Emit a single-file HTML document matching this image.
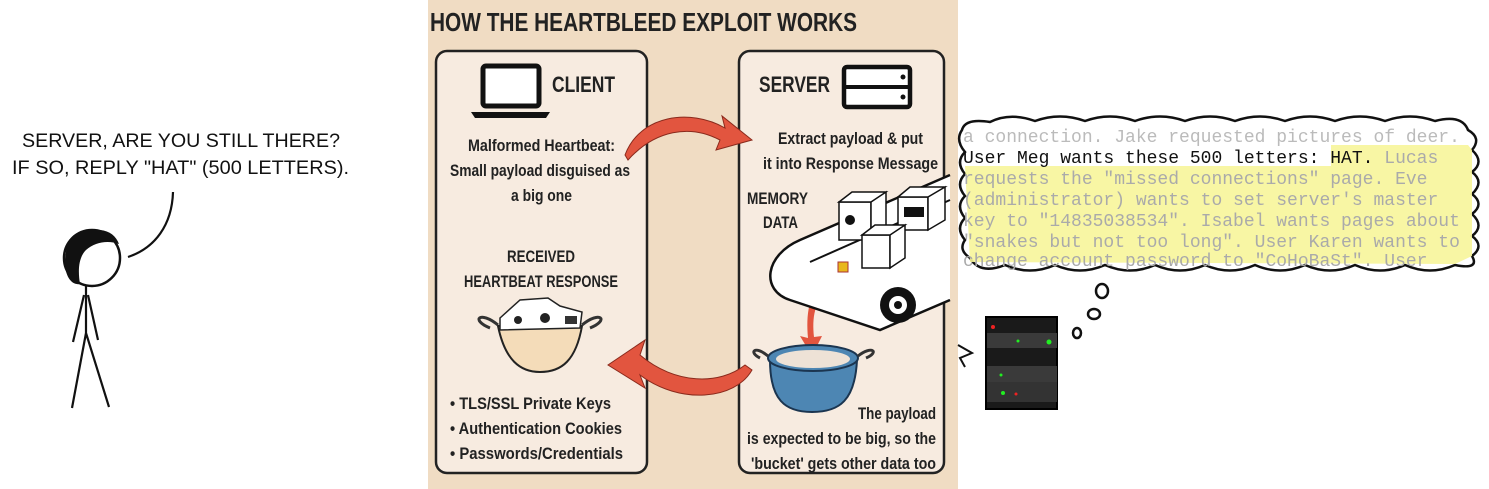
<!DOCTYPE html>
<html><head><meta charset="utf-8"><style>
html,body{margin:0;padding:0;background:#fff;width:1489px;height:489px;overflow:hidden}
svg{display:block}
.c{font-family:"Liberation Sans",sans-serif;font-weight:bold;fill:#222}
.h{font-family:"Liberation Sans",sans-serif;fill:#111}
.m{font-family:"Liberation Mono",monospace;font-size:18px}
</style></head><body>
<svg width="1489" height="489" viewBox="0 0 1489 489" xmlns="http://www.w3.org/2000/svg">
<text class="h" x="22" y="147" font-size="19" textLength="318" lengthAdjust="spacingAndGlyphs">SERVER, ARE YOU STILL THERE?</text>
<text class="h" x="12" y="174" font-size="19" textLength="337" lengthAdjust="spacingAndGlyphs">IF SO, REPLY "HAT" (500 LETTERS).</text>
<path d="M173 192 C172 225 155 248 128 257" fill="none" stroke="#111" stroke-width="2.2"/>
<circle cx="92" cy="258" r="28" fill="none" stroke="#111" stroke-width="2.5"/>
<path d="M66 252 C66 234 82 228 100 230 C110 231 116 236 119 244 C108 240 95 242 86 250 C78 258 78 272 80 284 C70 286 62 272 66 252Z" fill="#111"/>
<path d="M86 286 L86 335 M84 295 L73 342 M88 295 L98 340 M86 333 L72 408 M86 333 L109 407" stroke="#111" stroke-width="2.2" fill="none"/>
<rect x="428" y="0" width="530" height="489" fill="#f0dcc3"/>
<text class="c" x="430" y="31" font-size="26" textLength="427" lengthAdjust="spacingAndGlyphs" fill="#111">HOW THE HEARTBLEED EXPLOIT WORKS</text>
<rect x="436" y="51" width="211" height="422" rx="11" fill="#f7ebe0" stroke="#222" stroke-width="2.5"/>
<rect x="739" y="51" width="205" height="422" rx="11" fill="#f7ebe0" stroke="#222" stroke-width="2.5"/>
<rect x="483" y="66" width="56" height="40" rx="3" fill="#fff" stroke="#111" stroke-width="5"/>
<path d="M471 112 L550 112 L546 118 L475 118Z" fill="#111"/>
<text class="c" x="552" y="92" font-size="22" textLength="63" lengthAdjust="spacingAndGlyphs">CLIENT</text>
<text class="c" x="759" y="92" font-size="22" textLength="71" lengthAdjust="spacingAndGlyphs">SERVER</text>
<rect x="844" y="67" width="66" height="40" rx="3" fill="#fff" stroke="#111" stroke-width="4.5"/>
<line x1="844" y1="87" x2="910" y2="87" stroke="#111" stroke-width="4"/>
<circle cx="903" cy="77" r="2.5" fill="#111"/><circle cx="903" cy="97" r="2.5" fill="#111"/>
<g class="c" font-size="17">
<text x="468" y="151" textLength="147" lengthAdjust="spacingAndGlyphs">Malformed Heartbeat:</text>
<text x="450" y="176" textLength="180" lengthAdjust="spacingAndGlyphs">Small payload disguised as</text>
<text x="511" y="201" textLength="61" lengthAdjust="spacingAndGlyphs">a big one</text>
<text x="778" y="144" textLength="145" lengthAdjust="spacingAndGlyphs">Extract payload &amp; put</text>
<text x="763" y="169" textLength="175" lengthAdjust="spacingAndGlyphs">it into Response Message</text>
<text x="507" y="262" textLength="68" lengthAdjust="spacingAndGlyphs">RECEIVED</text>
<text x="464" y="287" textLength="154" lengthAdjust="spacingAndGlyphs">HEARTBEAT RESPONSE</text>
<text x="747" y="204" textLength="61" lengthAdjust="spacingAndGlyphs">MEMORY</text>
<text x="763" y="228" textLength="35" lengthAdjust="spacingAndGlyphs">DATA</text>
<text x="450" y="409" textLength="161" lengthAdjust="spacingAndGlyphs">• TLS/SSL Private Keys</text>
<text x="450" y="434" textLength="172" lengthAdjust="spacingAndGlyphs">• Authentication Cookies</text>
<text x="450" y="459" textLength="173" lengthAdjust="spacingAndGlyphs">• Passwords/Credentials</text>
<text x="858" y="419" textLength="78" lengthAdjust="spacingAndGlyphs">The payload</text>
<text x="747" y="444" textLength="189" lengthAdjust="spacingAndGlyphs">is expected to be big, so the</text>
<text x="751" y="469" textLength="185" lengthAdjust="spacingAndGlyphs">'bucket' gets other data too</text>
</g>
<path d="M625 155 C640 115 690 108 725 128 L722 116 L752 140 L716 150 L720 140 C690 124 655 130 628 160Z" fill="#e2553f" stroke="#8a2a1c" stroke-width="1"/>
<path d="M752 370 C735 400 680 405 640 375 L645 388 L608 365 L645 340 L640 355 C675 385 720 385 745 365Z" fill="#e2553f" stroke="#8a2a1c" stroke-width="1"/>
<path d="M826 283 C808 292 806 315 808 338 L800 336 L812 356 L822 336 L814 337 C812 318 814 300 830 290Z" fill="#e2553f"/>
<path d="M950 175 L800 240 C765 255 760 290 790 300 L880 330 L950 300" fill="#fff" stroke="#111" stroke-width="2.5"/>
<path d="M950 200 L810 262" stroke="#111" stroke-width="2" fill="none"/>
<circle cx="898" cy="305" r="18" fill="#111"/><circle cx="898" cy="305" r="9" fill="#fff"/><circle cx="898" cy="305" r="4" fill="#111"/>
<rect x="839" y="202" width="32" height="38" fill="#fff" stroke="#111" stroke-width="1.5"/>
<path d="M839 202 L852 192 L886 192 L871 202Z M871 202 L886 192 L886 230 L871 240Z" fill="#fff" stroke="#111" stroke-width="1.5"/>
<rect x="898" y="197" width="30" height="33" fill="#fff" stroke="#111" stroke-width="1.5"/>
<path d="M898 197 L910 187 L945 187 L928 197Z M928 197 L945 187 L945 220 L928 230Z" fill="#fff" stroke="#111" stroke-width="1.5"/>
<rect x="862" y="235" width="28" height="33" fill="#fff" stroke="#111" stroke-width="1.5"/>
<path d="M862 235 L875 225 L905 225 L890 235Z M890 235 L905 225 L905 258 L890 268Z" fill="#fff" stroke="#111" stroke-width="1.5"/>
<circle cx="850" cy="220" r="5" fill="#111"/><rect x="904" y="207" width="20" height="10" fill="#111"/>
<rect x="838" y="262" width="10" height="10" fill="#e8b71c" stroke="#a33" stroke-width="1"/>
<path d="M770 360 C770 400 785 412 812 412 C840 412 855 400 857 360Z" fill="#4d86b3" stroke="#1b3550" stroke-width="2"/>
<ellipse cx="813" cy="358" rx="45" ry="13" fill="#4d86b3" stroke="#1b3550" stroke-width="2"/>
<ellipse cx="813" cy="359" rx="37" ry="9" fill="#eee2d6"/>
<path d="M768 356 C755 345 748 352 760 358 M858 356 C872 345 880 352 866 358" fill="none" stroke="#333" stroke-width="3"/>
<path d="M498 326 C505 360 520 372 540 372 C562 372 576 360 582 326Z" fill="#f4dcb9" stroke="#222" stroke-width="2"/>
<path d="M498 325 C480 310 470 320 490 328 M582 325 C600 310 610 320 590 328" fill="none" stroke="#333" stroke-width="3"/>
<path d="M500 318 L520 300 L548 298 L560 306 L582 312 L580 328 L500 330Z" fill="#fff" stroke="#222" stroke-width="1.5"/>
<circle cx="518" cy="320" r="4" fill="#222"/><circle cx="545" cy="318" r="5" fill="#222"/><rect x="565" y="316" width="12" height="8" fill="#333"/>
<path d="M962 130 Q965 118 990 122 Q1010 112 1035 121 Q1060 112 1085 121 Q1110 112 1135 121 Q1160 112 1185 121 Q1210 112 1235 121 Q1260 112 1285 121 Q1310 112 1335 121 Q1360 112 1385 121 Q1410 112 1435 121 Q1462 114 1468 130 Q1482 138 1472 150 Q1485 162 1472 172 Q1485 182 1472 194 Q1485 204 1472 214 Q1485 226 1472 236 Q1485 246 1472 256 Q1480 270 1455 265 Q1430 276 1405 265 Q1380 276 1355 265 Q1330 276 1305 265 Q1280 276 1255 265 Q1230 276 1205 265 Q1180 276 1155 265 Q1130 276 1105 265 Q1080 276 1055 265 Q1030 276 1005 265 Q980 275 970 258 Q958 250 965 240 Q955 228 965 218 Q955 206 965 196 Q955 184 965 174 Q955 162 965 152 Q955 140 962 130Z" fill="#fff" stroke="#111" stroke-width="2.5"/>
<path d="M1331 145 L1468 145 L1472 150 L1472 256 L1455 264 L970 262 L965 166 L1331 166Z" fill="#f7f59a" opacity="0.9"/>
<g class="m" fill="#aaa">
<text x="963" y="142" fill="#bbb">a connection. Jake requested pictures of deer.</text>
<text x="963" y="163"><tspan fill="#111">User Meg wants these 500 letters: HAT.</tspan> Lucas</text>
<text x="963" y="184">requests the "missed connections" page.  Eve</text>
<text x="963" y="205">(administrator) wants to set server's master</text>
<text x="963" y="226">key to "14835038534". Isabel wants pages about</text>
<text x="963" y="247">"snakes but not too long". User Karen wants to</text>
<text x="963" y="266">change account password to "CoHoBaSt". User</text>
</g>
<ellipse cx="1102" cy="291" rx="6" ry="7" fill="none" stroke="#111" stroke-width="2.5"/>
<ellipse cx="1094" cy="314" rx="6" ry="5" fill="none" stroke="#111" stroke-width="2.5"/>
<ellipse cx="1077" cy="333" rx="4" ry="5" fill="none" stroke="#111" stroke-width="2.5"/>
<rect x="986" y="317" width="71" height="92" fill="#1a1a1a" stroke="#000" stroke-width="2"/>
<rect x="987" y="333" width="70" height="15" fill="#3a3a3a"/>
<rect x="987" y="366" width="70" height="16" fill="#3a3a3a"/>
<rect x="987" y="382" width="70" height="20" fill="#333"/>
<circle cx="993" cy="327" r="2" fill="#e22"/><circle cx="1018" cy="341" r="1.5" fill="#2e2"/><circle cx="1049" cy="342" r="2.5" fill="#2e2"/>
<circle cx="1001" cy="375" r="1.5" fill="#2e2"/><circle cx="1003" cy="393" r="2" fill="#2e2"/><circle cx="1016" cy="394" r="1.5" fill="#e22"/>
<path d="M958 345 L972 353 L960 358 L965 367" fill="none" stroke="#111" stroke-width="2"/>
</svg>
</body></html>
